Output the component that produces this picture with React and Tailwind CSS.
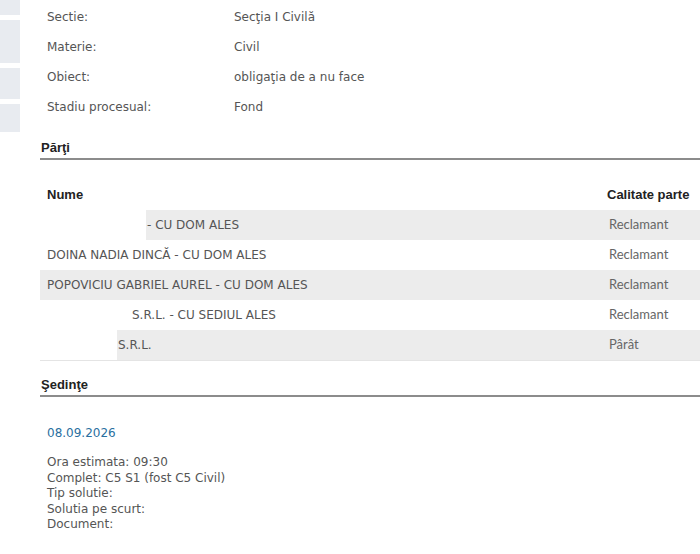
import React from 'react'

const INFO = [
  { label: 'Sectie:', value: 'Secţia I Civilă' },
  { label: 'Materie:', value: 'Civil' },
  { label: 'Obiect:', value: 'obligaţia de a nu face' },
  { label: 'Stadiu procesual:', value: 'Fond' },
]

const PARTIES = [
  { name: '- CU DOM ALES', mask: 'w-[106px]', calitate: 'Reclamant' },
  { name: 'DOINA NADIA DINCĂ - CU DOM ALES', mask: null, calitate: 'Reclamant' },
  { name: 'POPOVICIU GABRIEL AUREL - CU DOM ALES', mask: null, calitate: 'Reclamant' },
  { name: 'S.R.L. - CU SEDIUL ALES', mask: 'w-[91px]', calitate: 'Reclamant' },
  { name: 'S.R.L.', mask: 'w-[77px]', calitate: 'Pârât' },
]

const SEDINTA = [
  'Ora estimata: 09:30',
  'Complet: C5 S1 (fost C5 Civil)',
  'Tip solutie:',
  'Solutia pe scurt:',
  'Document:',
]

function SectionTitle({ children }) {
  return (
    <div className="border-b-2 border-[#8c8c8c] pl-[1px] pb-[1px] font-['Liberation_Sans',Arial,sans-serif] text-[13px] font-bold leading-[18px] text-[#222]">
      {children}
    </div>
  )
}

export default function App() {
  return (
    <div className="flex h-[554px] w-[700px] overflow-hidden bg-white font-['DejaVu_Sans',Verdana,sans-serif] text-[#555]">
      {/* left rail */}
      <div className="flex w-[20px] shrink-0 flex-col gap-[5px]">
        <div className="h-[15px] bg-[#e8ebf0]" />
        <div className="h-[43px] bg-[#e8ebf0]" />
        <div className="h-[31px] bg-[#e8ebf0]" />
        <div className="h-[28px] bg-[#e8ebf0]" />
      </div>

      <div className="ml-[20px] flex-1">
        {/* case info */}
        <div className="flex flex-col pt-[8px] text-[12px] leading-[18px]">
          {INFO.map(r => (
            <div key={r.label} className="flex h-[30px] items-start">
              <div className="w-[194px] shrink-0 pl-[7px]">{r.label}</div>
              <div>{r.value}</div>
            </div>
          ))}
        </div>

        {/* parti */}
        <div className="mt-[11px]">
          <SectionTitle>Părţi</SectionTitle>
        </div>

        <div className="mt-[25px] flex h-[20px] items-center font-['Liberation_Sans',Arial,sans-serif] text-[13px] font-bold text-[#222]">
          <div className="flex-1 pl-[7px]">Nume</div>
          <div className="w-[93px]">Calitate parte</div>
        </div>

        <div className="mt-[5px] border-b border-[#e4e4e4]">
          {PARTIES.map((p, i) => (
            <div
              key={i}
              className={`flex h-[30px] items-center text-[12px] ${i % 2 === 0 ? 'bg-[#ececec]' : 'bg-white'}`}
            >
              <div className="flex h-full flex-1 items-center">
                {p.mask ? (
                  <div className={`h-full shrink-0 bg-white ${p.mask}`} />
                ) : (
                  <div className="w-[7px] shrink-0" />
                )}
                <span className={p.mask ? 'pl-[1px]' : ''}>{p.name}</span>
              </div>
              <div className="w-[93px] pl-[2px] font-['Lato',sans-serif] text-[13px] text-[#666]">{p.calitate}</div>
            </div>
          ))}
        </div>

        {/* sedinte */}
        <div className="mt-[15px]">
          <SectionTitle>Şedinţe</SectionTitle>
        </div>

        <div className="pl-[7px] pt-[27px] text-[12px]">
          <div className="leading-[18px] text-[#2a6fa0]">08.09.2026</div>
          <div className="mt-[13px] leading-[15.5px]">
            {SEDINTA.map(l => (
              <div key={l}>{l}</div>
            ))}
          </div>
        </div>
      </div>
    </div>
  )
}
